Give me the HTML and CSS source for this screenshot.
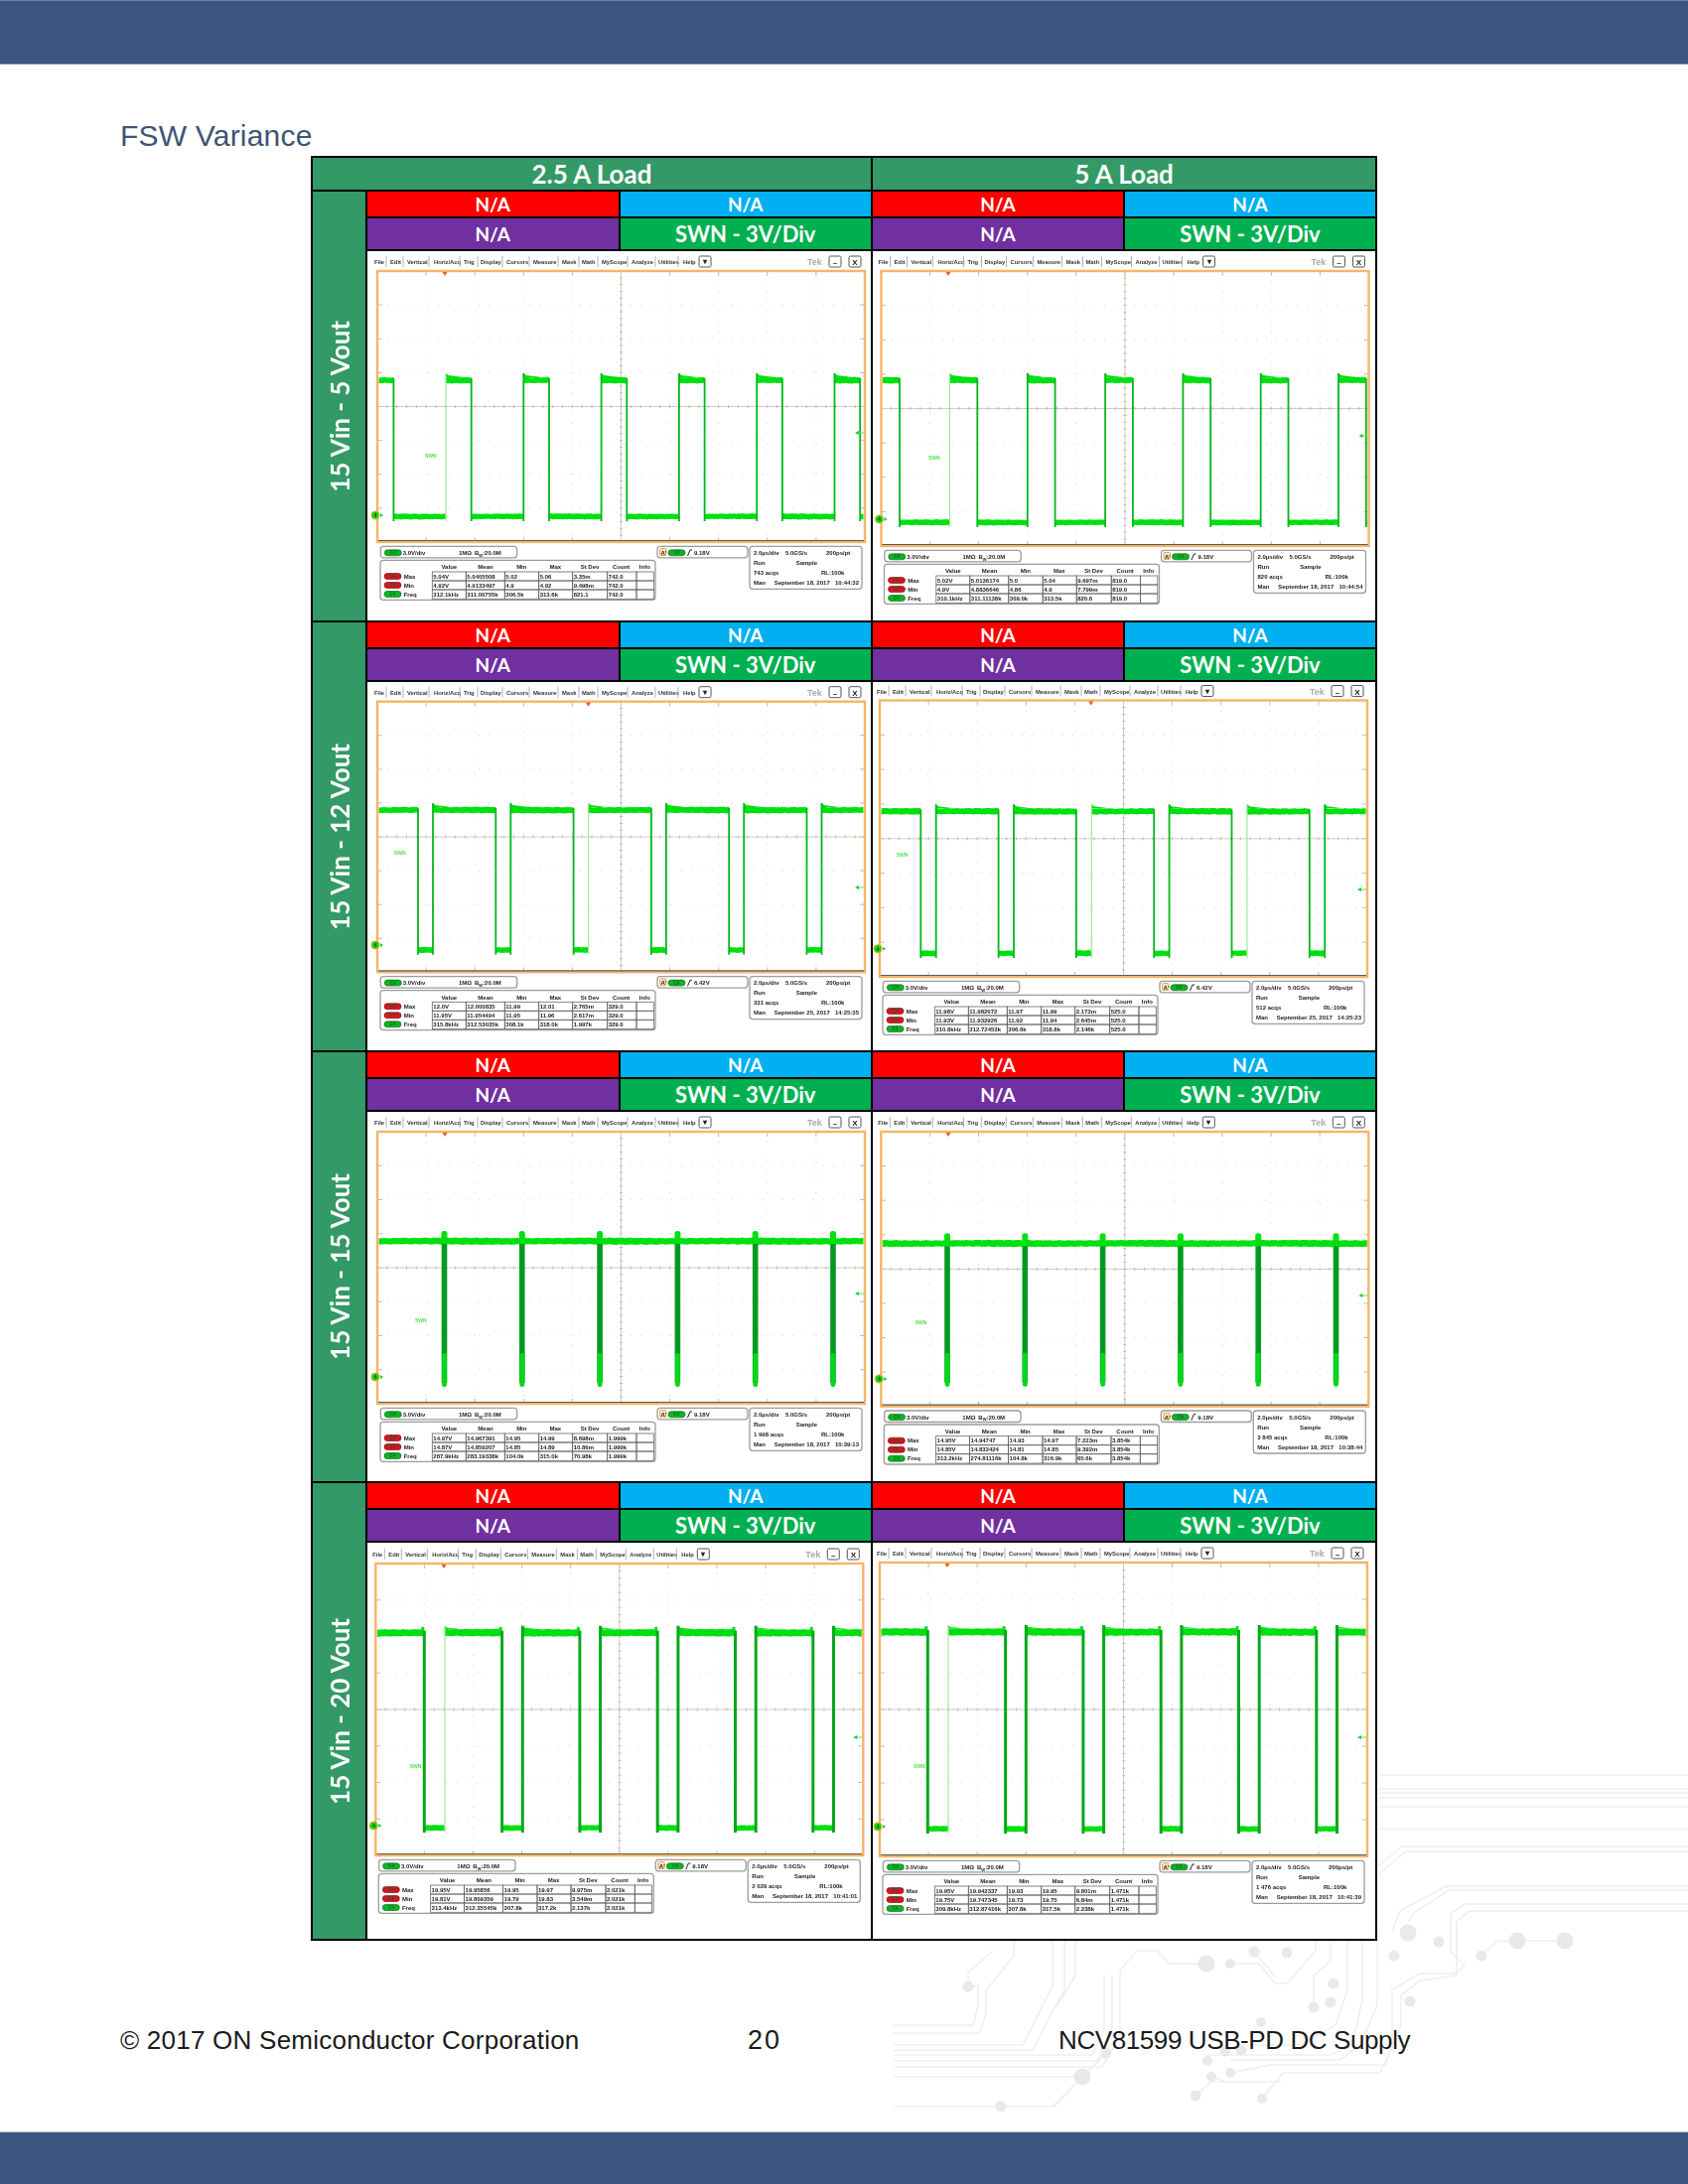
FILE: index.html
```html
<!DOCTYPE html>
<html lang="en">
<head>
<meta charset="utf-8">
<title>FSW Variance</title>
<link rel="stylesheet" href="styles.css">
</head>
<body>
<div class="page">
  <svg class="circuit" viewBox="0 0 1700 2200" aria-hidden="true">
    <g class="traces">
      <path d="M1388 1788H1700M1388 1802H1700M1388 1806H1700M1388 1811H1700M1388 1820H1700M1388 1842H1700"/>
      <path d="M1700 1860H1412L1388 1880M1700 1865H1416L1388 1888"/>
      <path d="M1700 1900H1456L1410 1925L1402 1945M1700 1904H1459L1425 1926L1418 1936"/>
      <path d="M1700 1918H1475L1461 1928V1966L1475 1980L1466 1988H1430L1402 2004V2062L1390 2088H1292L1271 2114"/>
      <path d="M1700 1925H1480L1467 1935V1990L1430 1995L1411 2010V2040L1395 2080H1280L1240 2088"/>
      <path d="M1492 1970L1508 1955H1576"/>
      <path d="M1387 1947V2020L1370 2060L1350 2075H1239M1372 1947V2015L1362 2060L1340 2070H1216"/>
      <path d="M1357 1947V2005L1345 2040L1310 2060H1250M1323 2022V1990L1340 1975V1947"/>
      <path d="M1215 1978H1178L1165 1965H1145L1128 1985V2052L1110 2082H900M1120 1990V2048L1105 2076H900M1112 1990V2044L1100 2070H900"/>
      <path d="M1239 1978H1268L1284 1998H1296L1325 1965V1947M1263 1966L1285 1992"/>
      <path d="M1090 2092H900M1114 2068L1090 2092L1062 2122H900M1090 2092L1060 2122"/>
      <path d="M900 2048H987L993 2027V2005L1021 1970V1947H1053M900 2040H980L985 2020V2000L975 2001L975 1987L1000 1965"/>
      <path d="M1060 1947V2000L1050 2020L1030 2060H900M1072 1947V2005L1058 2030L1040 2065H900M1083 1947V1990L1065 2020"/>
      <path d="M1220 2092L1235 2097H1290M1203 2111L1220 2097H1240"/>
    </g>
    <g class="pads">
      <circle cx="1418" cy="1947" r="8.5"/><circle cx="1449" cy="1956" r="5.5"/><circle cx="1404" cy="1970" r="5.5"/><circle cx="1492" cy="1970" r="5.5"/><circle cx="1528" cy="1955" r="8.5"/><circle cx="1576" cy="1955" r="8.5"/>
      <circle cx="1263" cy="1966" r="5.5"/><circle cx="1296" cy="1967" r="5.5"/><circle cx="1215" cy="1978" r="8.5"/><circle cx="1239" cy="1978" r="5"/><circle cx="1343" cy="1998" r="5.5"/><circle cx="1340" cy="2017" r="5.5"/><circle cx="1323" cy="2022" r="5.5"/><circle cx="1420" cy="2016" r="5.5"/><circle cx="1270" cy="2037" r="5"/><circle cx="975" cy="2001" r="5.5"/>
      <circle cx="1114" cy="2068" r="5.5"/><circle cx="1090" cy="2092" r="8.5"/><circle cx="1008" cy="2122" r="5.5"/><circle cx="1216" cy="2076" r="5"/><circle cx="1220" cy="2092" r="5"/><circle cx="1239" cy="2088" r="5"/><circle cx="1204" cy="2111" r="5.5"/><circle cx="1271" cy="2114" r="5"/><circle cx="1234" cy="2066" r="5.5"/><circle cx="1250" cy="2065" r="5.5"/>
    </g>
  </svg>

  <header class="banner"></header>
  <h1 class="title">FSW Variance</h1>

  <section class="matrix">
    <div class="corner-head">2.5 A Load</div>
    <div class="col-head">5 A Load</div>

    <div class="row-head"><span>15 Vin - 5 Vout</span></div>
    <div class="cell">
      <div class="tag red">N/A</div><div class="tag blue">N/A</div>
      <div class="tag purple">N/A</div><div class="tag green big">SWN - 3V/Div</div>
      <div class="scope" data-scope="0"></div>
    </div>
    <div class="cell">
      <div class="tag red">N/A</div><div class="tag blue">N/A</div>
      <div class="tag purple">N/A</div><div class="tag green big">SWN - 3V/Div</div>
      <div class="scope" data-scope="1"></div>
    </div>

    <div class="row-head"><span>15 Vin - 12 Vout</span></div>
    <div class="cell">
      <div class="tag red">N/A</div><div class="tag blue">N/A</div>
      <div class="tag purple">N/A</div><div class="tag green big">SWN - 3V/Div</div>
      <div class="scope" data-scope="2"></div>
    </div>
    <div class="cell">
      <div class="tag red">N/A</div><div class="tag blue">N/A</div>
      <div class="tag purple">N/A</div><div class="tag green big">SWN - 3V/Div</div>
      <div class="scope" data-scope="3"></div>
    </div>

    <div class="row-head"><span>15 Vin - 15 Vout</span></div>
    <div class="cell">
      <div class="tag red">N/A</div><div class="tag blue">N/A</div>
      <div class="tag purple">N/A</div><div class="tag green big">SWN - 3V/Div</div>
      <div class="scope" data-scope="4"></div>
    </div>
    <div class="cell">
      <div class="tag red">N/A</div><div class="tag blue">N/A</div>
      <div class="tag purple">N/A</div><div class="tag green big">SWN - 3V/Div</div>
      <div class="scope" data-scope="5"></div>
    </div>

    <div class="row-head"><span>15 Vin - 20 Vout</span></div>
    <div class="cell">
      <div class="tag red">N/A</div><div class="tag blue">N/A</div>
      <div class="tag purple">N/A</div><div class="tag green big">SWN - 3V/Div</div>
      <div class="scope" data-scope="6"></div>
    </div>
    <div class="cell">
      <div class="tag red">N/A</div><div class="tag blue">N/A</div>
      <div class="tag purple">N/A</div><div class="tag green big">SWN - 3V/Div</div>
      <div class="scope" data-scope="7"></div>
    </div>
  </section>

  <footer class="footer">
    <span class="foot-left">© 2017 ON Semiconductor Corporation</span>
    <span class="foot-page">20</span>
    <span class="foot-right">NCV81599 USB-PD DC Supply</span>
  </footer>

  <div class="banner bottom"></div>
</div>
<script src="script.js"></script>
</body>
</html>
```
FILE: styles.css
```css
* { box-sizing: border-box; }
html, body { margin: 0; padding: 0; background: #fff; }
.page {
  position: relative;
  width: 1700px;
  height: 2200px;
  display: flex;
  flex-direction: column;
  overflow: hidden;
  font-family: "Liberation Sans", Arial, sans-serif;
}
.circuit { position: absolute; inset: 0; width: 1700px; height: 2200px; }
.traces { fill: none; stroke: #efefef; stroke-width: 1.6; }
.pads { fill: #e9e9e9; }

.banner {
  position: relative;
  height: 65px;
  flex: none;
  background: #3b5681;
  border-top: 1px solid #6c83a6;
  border-bottom: 1px solid #7c90af;
}
.banner.bottom { height: 53px; margin-top: auto; border-bottom: 0; border-top-color: #c4ccd8; }

.title {
  position: relative;
  margin: 55px 0 3px 121px;
  height: 34px;
  font-size: 30px;
  line-height: 34px;
  font-weight: 400;
  letter-spacing: .2px;
  color: #3e5474;
}

.matrix {
  position: relative;
  margin-left: 313px;
  width: 1074px;
  height: 1798px;
  padding: 2px;
  display: grid;
  gap: 2px;
  grid-template-columns: 53px 507px 506px;
  grid-template-rows: 32px 432px 431px 432px 459px;
  background: #000;
  font-family: Lato, "Open Sans", sans-serif;
  font-weight: 700;
  color: #fff;
}
.corner-head, .col-head {
  display: flex;
  align-items: center;
  justify-content: center;
  background: #339966;
  font-size: 26px;
}
.corner-head { grid-column: 1 / 3; }
.row-head {
  display: flex;
  align-items: center;
  justify-content: center;
  background: #339966;
  font-size: 26px;
}
.row-head span { writing-mode: vertical-rl; transform: rotate(180deg); white-space: nowrap; }

.cell {
  display: grid;
  gap: 2px;
  grid-template-columns: 1fr 1fr;
  grid-template-rows: 25px 31px 1fr;
  min-height: 0;
}
.tag {
  display: flex;
  align-items: center;
  justify-content: center;
  font-size: 19px;
  line-height: 1;
}
.tag.big { font-size: 22px; }
.red { background: #ff0000; }
.blue { background: #00b0f0; }
.purple { background: #7030a0; }
.green { background: #00b050; }
.scope { grid-column: 1 / 3; background: #fff; min-height: 0; overflow: hidden; }
.scope-svg { display: block; width: 100%; height: 100%; filter: blur(.55px); font-family: "Liberation Sans", Arial, sans-serif; }

.menu-text { font-size: 5.8px; fill: #333; }
.menu-sep { stroke: #aab2c4; stroke-width: 1; }
.btn { fill: #fff; stroke: #555; stroke-width: 1; }
.btn-glyph { font-size: 8px; fill: #222; text-anchor: middle; }
.tek { font-size: 9px; fill: #aaa; }
.frame { fill: none; stroke: #f5b565; stroke-width: 2.4; }
.frame-base { stroke: #5a5a5a; stroke-width: 1.2; }
.dot { stroke: #d5d5d5; stroke-width: 1; stroke-dasharray: 1 9.2; fill: none; }
.axis { stroke: #d3ccc0; stroke-width: 1; }
.tick { stroke: #bbb; stroke-width: 1; }
.band { fill: #00e010; }
.edge { stroke: #00b81a; stroke-width: 1.8; fill: none; }
.edge.heavy { stroke: #06a81a; stroke-width: 3; }
.edge.faint { stroke: #9aea9a; stroke-width: 1.2; }
.spike { fill: #049a22; }
.spike-tip { fill: #00d81a; }
.swn { font-size: 5px; fill: #55e055; }
.ground { fill: #00e000; stroke: #f0a030; stroke-width: 1; }
.ground-num { font-size: 6px; fill: #153; text-anchor: middle; }
.arrow { fill: #00d820; }
.arrow-line { stroke: #66dd66; stroke-width: 1; }
.trig { fill: #e9582a; }

.box { fill: #fff; stroke: #9c9c9c; stroke-width: 1.3; }
.read { font-size: 6px; font-weight: 700; fill: #222; }
.read.head { text-anchor: middle; }
.cellbox { fill: none; stroke: #666; stroke-width: .8; }
.pill-on { fill: #0db51f; stroke: #0a5c14; stroke-width: .6; }
.pill-off { fill: #d8141f; stroke: #6a0a10; stroke-width: .6; }
.pill-text { font-size: 4.5px; fill: #063; text-anchor: middle; }
.pill-a { fill: #f3e2c6; stroke: #f0a850; stroke-width: 1; }
.slope { fill: none; stroke: #222; stroke-width: 1; }

.footer {
  position: relative;
  margin-top: 84px;
  padding-left: 121px;
  display: grid;
  grid-template-columns: 632px 313px auto;
  font-size: 26px;
  line-height: 32px;
  color: #1a1a1a;
  white-space: nowrap;
}
.foot-left { letter-spacing: .24px; }
.foot-page { letter-spacing: 2px; font-size: 27px; }
.foot-right { letter-spacing: -.4px; }
```
FILE: script.js
```js
var PERIOD = 78.3;
var WIDTH = 491;

var MENU = [["File",-3],["Edit",13],["Vertical",30],["Horiz/Acq",57],["Trig",87],["Display",104],["Cursors",130],["Measure",157],["Mask",186],["Math",206],["MyScope",226],["Analyze",256],["Utilities",283],["Help",308]];
var SEPS = [9,26,52,83,101,126,153,182,203,222,252,280,303];
var HEADS = [["Value",72.3],["Mean",109],["Min",145.3],["Max",179.3],["St Dev",214],["Count",245.7],["Info",269.3]];
var COLS = [55.3,89.3,128.3,162.7,196.7,231.7,261,278.3];
var LABELS = ["Max","Min","Freq"];

var SCOPES = [
  {L:380,T:273,B:546,hi:383,lo:520,f:396.4,r:449,gy:519,ay:436,tx:448,sw:[428,459],faint:[0],trig:"9.18V",acq:"743 acqs",date:"September 18, 2017",time:"10:44:32",
   rows:[["5.04V","5.0405508","5.02","5.06","3.35m","742.0"],["4.92V","4.9133497","4.9","4.92","9.498m","742.0"],["312.1kHz","311.00755k","306.5k","313.6k","821.1","742.0"]]},
  {L:887.5,T:273,B:550,hi:383,lo:526,f:906,r:956.5,gy:523,ay:439,tx:955,sw:[935,461],faint:[0],trig:"9.18V",acq:"820 acqs",date:"September 18, 2017",time:"10:44:54",
   rows:[["5.02V","5.0136174","5.0","5.04","9.697m","819.0"],["4.9V","4.8836646","4.86","4.9","7.799m","819.0"],["310.1kHz","311.11138k","309.0k","313.5k","820.6","819.0"]]},
  {L:380,T:706.7,B:979.3,hi:816,lo:956.7,f:421,r:436,gy:952,ay:894,tx:592.5,sw:[397,859],faint:[2],trig:"6.42V",acq:"331 acqs",date:"September 25, 2017",time:"14:25:35",
   rows:[["12.0V","12.000835","11.99","12.01","2.765m","329.0"],["11.95V","11.954494","11.95","11.96","2.617m","329.0"],["315.8kHz","312.53035k","308.1k","318.0k","1.997k","329.0"]]},
  {L:886,T:705.5,B:984,hi:817.3,lo:960,f:927.3,r:942.7,gy:955.7,ay:896,tx:1098.7,sw:[902.7,861],faint:[2,4],trig:"6.42V",acq:"512 acqs",date:"September 25, 2017",time:"14:25:23",
   rows:[["11.98V","11.982072","11.97","11.99","2.173m","525.0"],["11.93V","11.932926","11.92","11.94","2.645m","525.0"],["310.8kHz","312.72453k","306.6k","318.8k","2.146k","525.0"]]},
  {L:380,T:1140,B:1414,hi:1250,lo:1393,x:447.5,gy:1387,ay:1303,tx:448,sw:[418,1330],trig:"9.18V",acq:"1 998 acqs",date:"September 18, 2017",time:"10:39:13",
   rows:[["14.97V","14.967391","14.95","14.99","8.698m","1.999k"],["14.87V","14.859207","14.85","14.89","10.86m","1.999k"],["287.9kHz","283.19338k","104.0k","315.0k","70.98k","1.999k"]]},
  {L:887.3,T:1140,B:1416.7,hi:1252.3,lo:1392.7,x:954,gy:1389,ay:1305,tx:955,sw:[921.7,1332],trig:"9.18V",acq:"3 845 acqs",date:"September 18, 2017",time:"10:38:44",
   rows:[["14.95V","14.94747","14.93","14.97","7.223m","3.854k"],["14.85V","14.833424","14.81","14.85","9.392m","3.854k"],["313.2kHz","274.81116k","104.8k","316.9k","65.6k","3.854k"]]},
  {L:378.3,T:1575,B:1869,hi:1644.7,lo:1841,f:427.3,r:448,gy:1839,ay:1750,tx:447,sw:[412.7,1779],faint:[0],heavy:true,trig:"9.18V",acq:"2 029 acqs",date:"September 18, 2017",time:"10:41:01",
   rows:[["19.95V","19.95856","19.95","19.97","9.975m","2.021k"],["19.81V","19.809359","19.79","19.83","3.549m","2.021k"],["313.4kHz","312.35545k","307.8k","317.2k","2.137k","2.021k"]]},
  {L:886,T:1574,B:1870,hi:1644,lo:1842,f:934.3,r:955,gy:1840,ay:1750,tx:954,sw:[920,1779],faint:[0],heavy:true,trig:"9.18V",acq:"1 476 acqs",date:"September 18, 2017",time:"10:41:39",
   rows:[["19.95V","19.942337","19.93","19.95","9.801m","1.471k"],["19.75V","19.747345","19.73","19.75","6.84m","1.471k"],["309.8kHz","312.87416k","307.8k","317.5k","2.238k","1.471k"]]}
];

function text(x, y, cls, s) {
  return '<text x="' + x + '" y="' + y + '" class="' + cls + '">' + s + '</text>';
}
function rect(x, y, w, h, cls, rx) {
  return '<rect x="' + x + '" y="' + y + '" width="' + w + '" height="' + h + '" class="' + cls + '"' + (rx ? ' rx="' + rx + '"' : '') + '/>';
}
function line(x1, y1, x2, y2, cls) {
  return '<line x1="' + x1 + '" y1="' + y1 + '" x2="' + x2 + '" y2="' + y2 + '" class="' + cls + '"/>';
}
function pill(x, cy, on, label) {
  return rect(x, cy - 3, 17, 6, on ? "pill-on" : "pill-off", 3) + text(x + 8.5, cy + 1.6, "pill-text", label);
}
function noise(x) {
  return (Math.sin(x * 1.73) + Math.sin(x * 0.61 + 1.3) + Math.sin(x * 3.1)) / 3;
}
function noisyBand(x0, x1, yTop, yBot, amp) {
  var top = [], bot = [], x;
  for (x = x0; x < x1; x += 2) {
    top.push(x.toFixed(1) + "," + (yTop + amp * noise(x)).toFixed(1));
    bot.unshift(x.toFixed(1) + "," + (yBot + amp * noise(x + 40)).toFixed(1));
  }
  top.push(x1.toFixed(1) + "," + yTop);
  bot.unshift(x1.toFixed(1) + "," + yBot);
  return '<polygon class="band" points="' + top.concat(bot).join(" ") + '"/>';
}

function menuBar(s) {
  var y = s.T - 7, out = "";
  MENU.forEach(function (m) { out += text(s.L + m[1], y, "menu-text", m[0]); });
  SEPS.forEach(function (x) { out += line(s.L + x, y - 8, s.L + x, y + 3, "menu-sep"); });
  out += rect(s.L + 324, y - 8, 12, 11, "btn", 1.5) + text(s.L + 330, y, "btn-glyph", "▾");
  out += text(s.L + 433, y + 1, "tek", "Tek");
  out += rect(s.L + 455, y - 8, 12, 11, "btn", 1.5) + text(s.L + 461, y + 1, "btn-glyph", "–");
  out += rect(s.L + 475, y - 8, 12, 11, "btn", 1.5) + text(s.L + 481, y + 1, "btn-glyph", "X");
  return out;
}

function grid(s) {
  var out = "", R = s.L + WIDTH, H = s.B - s.T, cy = (s.T + s.B) / 2, cx = s.L + WIDTH / 2, i, j;
  for (i = 1; i < 10; i++) {
    var x = s.L + i * WIDTH / 10;
    if (i !== 5) out += line(x, s.T, x, s.B, "dot");
    out += line(x, s.T + 1, x, s.T + 5, "tick") + line(x, s.B - 5, x, s.B - 1, "tick");
  }
  for (j = 1; j < 8; j++) {
    var y = s.T + j * H / 8;
    if (j !== 4) out += line(s.L, y, R, y, "dot");
    out += line(s.L + 1, y, s.L + 5, y, "tick") + line(R - 5, y, R - 1, y, "tick");
  }
  out += line(cx, s.T, cx, s.B, "axis") + line(s.L, cy, R, cy, "axis");
  for (i = 0; i <= 50; i++) {
    var tx = s.L + i * WIDTH / 50;
    out += line(tx, cy - 1.5, tx, cy + 1.5, "tick");
  }
  for (j = 0; j <= 40; j++) {
    var ty = s.T + j * H / 40;
    out += line(cx - 1.5, ty, cx + 1.5, ty, "tick");
  }
  return out;
}

function square(s) {
  var out = "", x0 = s.L + 1.5, x1 = s.L + WIDTH - 1.5, k, ed = s.heavy ? "edge heavy" : "edge";
  var up = s.heavy ? 3.5 : 3, over = 7;
  for (k = -1; k < 8; k++) {
    var f = s.f + k * PERIOD, r = s.r + k * PERIOD, nf = s.f + (k + 1) * PERIOD;
    var band0 = Math.max(r, x0), band1 = Math.min(nf, x1);
    if (band1 > band0 && band0 < x1) {
      out += noisyBand(band0, band1, s.hi - up, s.hi + up, 0.6);
      if (r > x0 && r < x1) {
        var tail = Math.min(r + 18, band1);
        out += '<polygon class="band" points="' + r + ',' + (s.hi - over) + ' ' + (r + 2.5) + ',' + (s.hi - 5) + ' ' + tail + ',' + (s.hi - up) + ' ' + r + ',' + (s.hi - up) + '"/>';
      }
      if (s.heavy && nf < x1) out += rect(nf - 3, s.hi - 6, 3, 4, "band", 1);
    }
    if (f > x0 && f < x1) {
      var low1 = Math.min(r, x1);
      out += noisyBand(f, low1, s.lo - 2.5, s.lo + 3, 0.5);
      out += line(f, s.hi - 2, f, s.lo + 5, ed);
    }
    if (r > x0 && r < x1) {
      var isFaint = s.faint && s.faint.indexOf(k) >= 0;
      out += line(r, s.hi - over, r, s.lo + 5, isFaint ? "edge faint" : ed);
    }
  }
  return out;
}

function spikes(s) {
  var out = noisyBand(s.L + 1.5, s.L + WIDTH - 1.5, s.hi - 3, s.hi + 3.5, 0.6), k;
  for (k = 0; k < 6; k++) {
    var x = s.x + k * PERIOD;
    out += rect(x - 3, s.hi - 10, 6, 9, "band", 2.5);
    out += rect(x - 2.8, s.hi + 3, 5.6, s.lo - s.hi - 3, "spike");
    out += rect(x - 2.4, s.lo - 30, 4.8, 34, "spike-tip", 2);
  }
  return out;
}

function markers(s) {
  var R = s.L + WIDTH, out = "";
  out += text(s.sw[0], s.sw[1] + 2, "swn", "SWN");
  out += '<polygon class="trig" points="' + (s.tx - 2.5) + ',' + (s.T + 1) + ' ' + (s.tx + 2.5) + ',' + (s.T + 1) + ' ' + s.tx + ',' + (s.T + 5) + '"/>';
  out += '<circle cx="' + (s.L - 2) + '" cy="' + s.gy + '" r="4" class="ground"/>' + text(s.L - 2, s.gy + 2, "ground-num", "4");
  out += '<polygon class="arrow" points="' + (s.L + 6) + ',' + s.gy + ' ' + (s.L + 3) + ',' + (s.gy - 2) + ' ' + (s.L + 3) + ',' + (s.gy + 2) + '"/>';
  out += line(R - 7, s.ay, R - 1, s.ay, "arrow-line");
  out += '<polygon class="arrow" points="' + (R - 10) + ',' + s.ay + ' ' + (R - 6) + ',' + (s.ay - 2) + ' ' + (R - 6) + ',' + (s.ay + 2) + '"/>';
  return out;
}

function panels(s) {
  var L = s.L, B = s.B, y0 = B + 11, out = "";
  // channel readout
  out += rect(L + 3.3, B + 4.3, 137.4, 11.5, "box", 3);
  out += pill(L + 7.3, B + 10.8, true, "C4");
  out += text(L + 25.7, y0 + 2, "read", "3.0V/div");
  out += text(L + 82, y0 + 2, "read", "1MΩ");
  out += text(L + 98, y0 + 2, "read", "B<tspan font-size='4' dy='1.5'>W</tspan><tspan dy='-1.5'>:20.0M</tspan>");
  // trigger readout
  out += rect(L + 282, B + 4.3, 91, 11.5, "box", 3);
  out += rect(L + 284.5, B + 6.5, 6.5, 7, "pill-a", 1);
  out += text(L + 285.5, y0 + 2, "read", "A'");
  out += pill(L + 293, B + 10.8, true, "C4");
  out += '<path class="slope" d="M' + (L + 312.5) + ' ' + (B + 14) + 'L' + (L + 315) + ' ' + (B + 8) + 'H' + (L + 317) + '"/>';
  out += text(L + 319, y0 + 2, "read", s.trig);
  // status block
  out += rect(L + 375, B + 4.3, 113, 43, "box", 3);
  out += text(L + 379, y0 + 2, "read", "2.0µs/div") + text(L + 411, y0 + 2, "read", "5.0GS/s") + text(L + 452, y0 + 2, "read", "200ps/pt");
  out += text(L + 379, y0 + 12, "read", "Run") + text(L + 421.7, y0 + 12, "read", "Sample");
  out += text(L + 379, y0 + 22, "read", s.acq) + text(L + 447, y0 + 22, "read", "RL:100k");
  out += text(L + 379, y0 + 32, "read", "Man") + text(L + 399.7, y0 + 32, "read", s.date) + text(L + 461, y0 + 32, "read", s.time);
  // measurements
  out += rect(L + 3, B + 18.3, 277, 40, "box", 3);
  HEADS.forEach(function (h) { out += text(L + h[1], B + 27.2, "read head", h[0]); });
  var top = [B + 30, B + 39, B + 48, B + 57.3];
  s.rows.forEach(function (row, ri) {
    var cyl = top[ri] + 4.5;
    out += pill(L + 7, cyl, ri === 2, "C4");
    out += text(L + 26.7, cyl + 2.2, "read", LABELS[ri]);
    row.forEach(function (v, ci) { out += text(L + COLS[ci] + 1, cyl + 2.2, "read", v); });
    for (var c = 0; c < 7; c++) {
      var w = COLS[c + 1] - COLS[c];
      out += rect(L + COLS[c], top[ri], w, top[ri + 1] - top[ri], "cellbox");
    }
  });
  return out;
}

function scopeMarkup(s) {
  var R = s.L + WIDTH;
  return menuBar(s) + grid(s) + (s.x ? spikes(s) : square(s)) +
    rect(s.L, s.T, WIDTH, s.B - s.T, "frame") +
    line(s.L + 1, s.B - 1.5, R - 1, s.B - 1.5, "frame-base") +
    markers(s) + panels(s);
}

document.querySelectorAll(".scope").forEach(function (el) {
  var s = SCOPES[+el.getAttribute("data-scope")];
  var b = el.getBoundingClientRect();
  var vb = b.left + " " + b.top + " " + b.width + " " + b.height;
  el.innerHTML = '<svg class="scope-svg" viewBox="' + vb + '" role="img">' + scopeMarkup(s) + '</svg>';
});
```
